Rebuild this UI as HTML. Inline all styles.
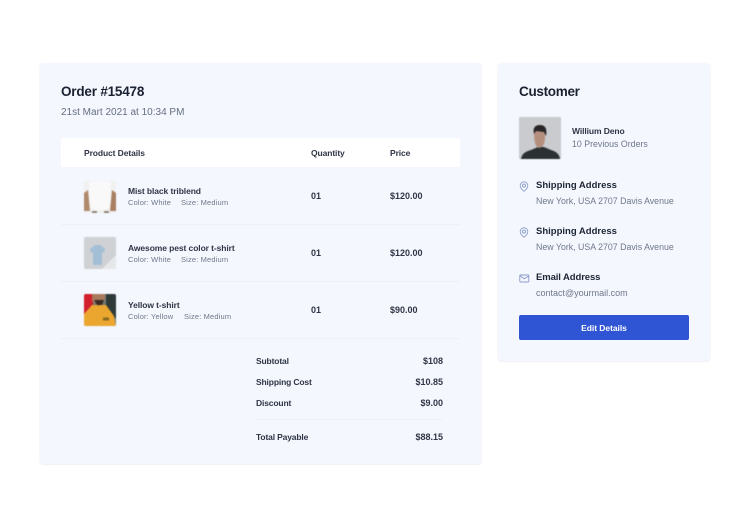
<!DOCTYPE html>
<html><head><meta charset="utf-8"><style>
html,body{margin:0;padding:0;background:#fff}
body{width:750px;height:527px;position:relative;overflow:hidden;font-family:"Liberation Sans",sans-serif;color:#1d2433}
div{position:absolute}
svg.b{filter:blur(.5px)}
.t{white-space:nowrap;line-height:14px}
.card{background:#f4f7fe;border-radius:3px;box-shadow:0 .5px 1.5px rgba(130,140,170,.2)}
.h{font-size:8.5px;font-weight:bold;color:#2f3545;letter-spacing:-.1px}
.n{font-size:8.5px;font-weight:bold;color:#2f3545;letter-spacing:-.09px}
.s{font-size:7.5px;color:#6f7789;letter-spacing:.15px}
.v{font-size:8.5px;font-weight:bold;color:#2f3545;letter-spacing:-.15px}
.p{font-size:9px;font-weight:bold;color:#2f3545}
.r{text-align:right;width:60px}
.l{height:1px;background:#edf0f8}
.a{font-size:9.5px;font-weight:bold;color:#1d2433}
.g{font-size:8.8px;color:#6f7789}
</style></head><body>
<div class="card" style="left:40px;top:63px;width:441px;height:401px"></div>
<div class="card" style="left:498px;top:63px;width:212px;height:298px"></div>

<div class="t" style="left:61px;top:84px;font-size:13.5px;font-weight:bold;color:#1a2130;letter-spacing:-.2px;line-height:16px">Order #15478</div>
<div class="t" style="left:61px;top:106px;font-size:10px;color:#666e80">21st Mart 2021 at 10:34 PM</div>

<div style="left:61px;top:138px;width:399px;height:29px;background:#fff;border-radius:2px"></div>
<div class="t h" style="left:84px;top:146px">Product Details</div>
<div class="t h" style="left:311px;top:146px">Quantity</div>
<div class="t h" style="left:390px;top:146px">Price</div>

<svg class="b" style="position:absolute;left:84px;top:181px" width="32" height="32" viewBox="0 0 32 32"><rect width="32" height="32" rx="2" fill="#f1f1f1"/><path d="M0 12 L4 9 L6 30 L0 30Z" fill="#b08a6c"/><path d="M32 12 L28 9 L26 30 L32 30Z" fill="#a87f62"/><path d="M5 1 Q16 -1 27 1 L26 26 Q16 32 6 26Z" fill="#f9f9f9"/><path d="M8 31h5M20 31h5" stroke="#776655" stroke-width="1.5"/></svg>
<div class="t n" style="left:128px;top:184px">Mist black triblend</div>
<div class="t s" style="left:128px;top:196px">Color: White</div>
<div class="t s" style="left:181px;top:196px">Size: Medium</div>
<div class="t p" style="left:311px;top:189px">01</div>
<div class="t p" style="left:390px;top:189px">$120.00</div>
<div class="l" style="left:61px;top:224px;width:399px"></div>

<svg class="b" style="position:absolute;left:84px;top:237px" width="32" height="32" viewBox="0 0 32 32"><rect width="32" height="32" rx="2" fill="#cfd1d4"/><path d="M18 32 L32 18 V32Z" fill="#e6e7e8"/><path d="M6 12 L11 8 L16 8 L21 12 L20 16 L18 15 L18 28 L9 28 L9 15 L7 16Z" fill="#a3bfd6"/></svg>
<div class="t n" style="left:128px;top:241px">Awesome pest color t-shirt</div>
<div class="t s" style="left:128px;top:253px">Color: White</div>
<div class="t s" style="left:181px;top:253px">Size: Medium</div>
<div class="t p" style="left:311px;top:246px">01</div>
<div class="t p" style="left:390px;top:246px">$120.00</div>
<div class="l" style="left:61px;top:281px;width:399px"></div>

<svg class="b" style="position:absolute;left:84px;top:294px" width="32" height="32" viewBox="0 0 32 32"><defs><clipPath id="c"><rect width="32" height="32" rx="2"/></clipPath></defs><g clip-path="url(#c)"><rect width="32" height="32" fill="#6f7a76"/><rect x="22" width="10" height="24" fill="#2f3a38"/><rect width="9" height="22" fill="#d2202c"/><path d="M0 20 L8 11 L22 11 L30 22 L32 32 H0Z" fill="#eba62f"/><path d="M8 0 H21 V6 L15 12 L8 7Z" fill="#a87a5e"/><path d="M10 6 L20 6 L18 11 L13 11Z" fill="#3a2a22"/><path d="M19 25h6" stroke="#8a6a20" stroke-width="3"/></g></svg>
<div class="t n" style="left:128px;top:298px">Yellow t-shirt</div>
<div class="t s" style="left:128px;top:310px">Color: Yellow</div>
<div class="t s" style="left:184px;top:310px">Size: Medium</div>
<div class="t p" style="left:311px;top:303px">01</div>
<div class="t p" style="left:390px;top:303px">$90.00</div>
<div class="l" style="left:61px;top:338px;width:399px"></div>

<div class="t v" style="left:256px;top:354px">Subtotal</div>
<div class="t p r" style="left:383px;top:354px">$108</div>
<div class="t v" style="left:256px;top:375px">Shipping Cost</div>
<div class="t p r" style="left:383px;top:375px">$10.85</div>
<div class="t v" style="left:256px;top:396px">Discount</div>
<div class="t p r" style="left:383px;top:396px">$9.00</div>
<div class="l" style="left:256px;top:419px;width:187px"></div>
<div class="t v" style="left:256px;top:430px">Total Payable</div>
<div class="t p r" style="left:383px;top:430px">$88.15</div>

<div class="t" style="left:519px;top:84px;font-size:13.5px;font-weight:bold;color:#1a2130;letter-spacing:-.3px;line-height:16px">Customer</div>
<svg class="b" style="position:absolute;left:519px;top:117px" width="42" height="42" viewBox="0 0 42 42"><rect width="42" height="42" rx="1" fill="#c9cbce"/><path d="M2 42 Q3 35 12 33 L19 30 L25 30 L32 33 Q40 35 41 42Z" fill="#2b3132"/><path d="M15 16 Q15 30 20 31 Q26 30 26 20 L26 14 L16 13Z" fill="#b58f7e"/><path d="M15 17 Q13 8 21 8 Q29 8 27 19 L25 15 L17 14Z" fill="#272526"/></svg>
<div class="t n" style="left:572px;top:124px;letter-spacing:-.1px">Willium Deno</div>
<div class="t g" style="left:572px;top:137px">10 Previous Orders</div>

<svg style="position:absolute;left:519px;top:181px" width="10" height="11" viewBox="0 0 10 11" fill="none" stroke="#8a9bc8" stroke-width=".9"><path d="M5 10.3 C2.5 8.3 1.2 6.6 1.2 4.6 A3.8 3.8 0 0 1 8.8 4.6 C8.8 6.6 7.5 8.3 5 10.3Z"/><circle cx="5" cy="4.6" r="1.5"/></svg>
<div class="t a" style="left:536px;top:179px">Shipping Address</div>
<div class="t g" style="left:536px;top:194px">New York, USA 2707 Davis Avenue</div>

<svg style="position:absolute;left:519px;top:227px" width="10" height="11" viewBox="0 0 10 11" fill="none" stroke="#8a9bc8" stroke-width=".9"><path d="M5 10.3 C2.5 8.3 1.2 6.6 1.2 4.6 A3.8 3.8 0 0 1 8.8 4.6 C8.8 6.6 7.5 8.3 5 10.3Z"/><circle cx="5" cy="4.6" r="1.5"/></svg>
<div class="t a" style="left:536px;top:225px">Shipping Address</div>
<div class="t g" style="left:536px;top:240px">New York, USA 2707 Davis Avenue</div>

<svg style="position:absolute;left:519px;top:274px" width="11" height="9" viewBox="0 0 11 9" fill="none" stroke="#8a9bc8" stroke-width=".9"><rect x=".8" y="1" width="9" height="7" rx=".6"/><path d="M1 1.8 L5.3 4.8 L10 1.8"/></svg>
<div class="t a" style="left:536px;top:271px;letter-spacing:-.1px">Email Address</div>
<div class="t g" style="left:536px;top:286px;font-size:9px">contact@yourmail.com</div>

<div style="left:519px;top:315px;width:170px;height:25px;background:#2f55d4;border-radius:2px"></div>
<div class="t" style="left:519px;top:321px;width:170px;text-align:center;font-size:8.5px;font-weight:bold;color:#fff;letter-spacing:-.05px">Edit Details</div>
</body></html>
